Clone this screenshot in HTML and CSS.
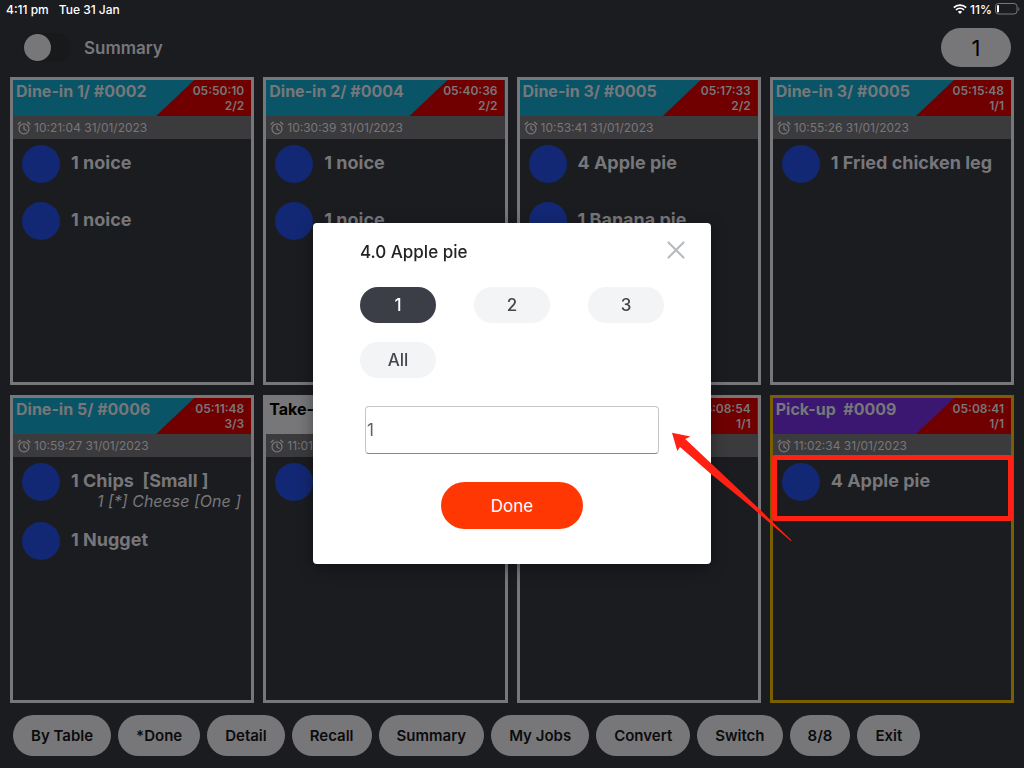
FILE: index.html
```html
<!DOCTYPE html>
<html lang="en">
<head>
<meta charset="utf-8">
<meta name="viewport" content="width=device-width, initial-scale=1">
<title>Kitchen display</title>
<link rel="stylesheet" href="styles.css">
</head>
<body>
<svg class="defs" aria-hidden="true">
  <symbol id="alarm" viewBox="0 0 14 14">
    <g fill="none" stroke="currentColor" stroke-width="1.3" stroke-linecap="round" stroke-linejoin="round">
      <circle cx="7" cy="7.8" r="5"/>
      <path d="M7 5v3l2 1.3M1 3.2 3.4 1.2M13 3.2 10.6 1.2"/>
    </g>
  </symbol>
</svg>
<div class="app">
  <div class="status">
    <span>4:11 pm</span><span>Tue 31 Jan</span>
    <div class="status-right">
      <svg width="14" height="10" viewBox="0 0 14 10"><g fill="none" stroke="#fff" stroke-width="1.7"><path d="M.8 3.6a8.8 8.8 0 0 1 12.4 0"/><path d="M3 5.9a5.7 5.7 0 0 1 8 0"/></g><path fill="#fff" d="M4.9 7.7a3 3 0 0 1 4.2 0L7 9.9z"/></svg>
      <span>11%</span>
      <svg width="25" height="12" viewBox="0 0 25 12"><rect x=".5" y=".5" width="21.5" height="10.5" rx="3" fill="none" stroke="#77777a"/><rect x="2" y="2" width="2" height="7.5" rx="1" fill="#fff"/><path d="M23.3 4v4c1.4-.6 1.4-3.400 0-4z" fill="#77777a"/></svg>
    </div>
  </div>
  <header class="top">
    <label class="switch"><input type="checkbox" class="toggle">Summary</label>
    <button class="count">1</button>
  </header>
  <main class="grid">
    <article class="card">
      <div class="head"><h2>Dine-in 1/ #0002</h2><div class="timer">05:50:10<br>2/2</div></div>
      <div class="stamp"><svg><use href="#alarm"/></svg>10:21:04 31/01/2023</div>
      <ul><li><i class="dot"></i><div>1 noice</div></li><li><i class="dot"></i><div>1 noice</div></li></ul>
    </article>
    <article class="card">
      <div class="head"><h2>Dine-in 2/ #0004</h2><div class="timer">05:40:36<br>2/2</div></div>
      <div class="stamp"><svg><use href="#alarm"/></svg>10:30:39 31/01/2023</div>
      <ul><li><i class="dot"></i><div>1 noice</div></li><li><i class="dot"></i><div>1 noice</div></li></ul>
    </article>
    <article class="card">
      <div class="head"><h2>Dine-in 3/ #0005</h2><div class="timer">05:17:33<br>2/2</div></div>
      <div class="stamp"><svg><use href="#alarm"/></svg>10:53:41 31/01/2023</div>
      <ul><li><i class="dot"></i><div>4 Apple pie</div></li><li><i class="dot"></i><div>1 Banana pie</div></li></ul>
    </article>
    <article class="card">
      <div class="head"><h2>Dine-in 3/ #0005</h2><div class="timer">05:15:48<br>1/1</div></div>
      <div class="stamp"><svg><use href="#alarm"/></svg>10:55:26 31/01/2023</div>
      <ul><li><i class="dot"></i><div>1 Fried chicken leg</div></li></ul>
    </article>
    <article class="card">
      <div class="head"><h2>Dine-in 5/ #0006</h2><div class="timer">05:11:48<br>3/3</div></div>
      <div class="stamp"><svg><use href="#alarm"/></svg>10:59:27 31/01/2023</div>
      <ul><li><i class="dot"></i><div>1 Chips&nbsp; [Small ]<em>1 [*] Cheese [One ]</em></div></li><li><i class="dot"></i><div>1 Nugget</div></li></ul>
    </article>
    <article class="card takeaway">
      <div class="head"><h2>Take-away</h2><div class="timer"></div></div>
      <div class="stamp"><svg><use href="#alarm"/></svg>11:01</div>
      <ul><li><i class="dot"></i></li></ul>
    </article>
    <article class="card takeaway">
      <div class="head"><h2></h2><div class="timer">05:08:54<br>1/1</div></div>
      <div class="stamp"></div>
      <ul></ul>
    </article>
    <article class="card pickup">
      <div class="head"><h2>Pick-up&nbsp; #0009</h2><div class="timer">05:08:41<br>1/1</div></div>
      <div class="stamp"><svg><use href="#alarm"/></svg>11:02:34 31/01/2023</div>
      <ul><li class="marked"><i class="dot"></i><div>4 Apple pie</div></li></ul>
    </article>
  </main>
  <footer class="actions">
    <button>By Table</button><button>*Done</button><button>Detail</button><button>Recall</button><button>Summary</button><button>My Jobs</button><button>Convert</button><button>Switch</button><button>8/8</button><button>Exit</button>
  </footer>
</div>
<div class="overlay">
  <section class="modal" role="dialog" aria-labelledby="dialog-title">
    <h1 id="dialog-title">4.0 Apple pie</h1>
    <button class="close" aria-label="Close"><svg width="18" height="18" viewBox="0 0 18 18"><path d="M1.500 1.500l15 15M16.500 1.500l-15 15" stroke="#b8bcc2" stroke-width="2.200" stroke-linecap="round"/></svg></button>
    <div class="choices">
      <button class="selected">1</button><button>2</button><button>3</button><button>All</button>
    </div>
    <input class="qty" type="text" value="1" aria-label="Quantity">
    <button class="done">Done</button>
    <svg class="arrow" width="122" height="110" viewBox="0 0 122 110"><path fill="#ff2114" d="M1 .7 19.500 4.500 14.300 7 45 36 82 71 120.700 108.500 119.800 109 78 73 40 42 9 15 6.300 19z"/></svg>
  </section>
</div>
</body>
</html>
```
FILE: styles.css
```css
* { box-sizing: border-box; }
body { margin: 0; background: #1b1c20; color: #77777a; font-family: Inter, "Liberation Sans", sans-serif; }
button, input { font: inherit; }
button { border: 0; padding: 0; }
h1, h2, ul { margin: 0; padding: 0; list-style: none; }
.defs { position: absolute; width: 0; height: 0; }
.app { min-height: 100vh; display: flex; flex-direction: column; }

.status { display: flex; align-items: center; gap: 10px; height: 18px; padding: 0 4px 0 6px; color: #fff; font-size: 12px; font-weight: 500; }
.status-right { display: flex; align-items: center; gap: 3px; margin-left: auto; }
.top { display: flex; align-items: center; justify-content: space-between; height: 59px; padding: 0 13px 0 23px; }
.switch { display: flex; align-items: center; gap: 13px; font-size: 17px; font-weight: 600; }
.toggle { appearance: none; width: 48px; height: 29px; margin: 0; border-radius: 15px; background: #18191b; }
.toggle::before { content: ""; display: block; width: 27px; height: 27px; margin: 1px; border-radius: 50%; background: #77777a; }
.count { width: 70px; height: 39px; border-radius: 20px; background: #77777a; color: #000; font-size: 22px; }

.grid { flex: 1; display: grid; grid-template-columns: repeat(4, minmax(0, 1fr)); grid-auto-rows: 1fr; gap: 10px 9px; padding: 0 10px; }
.card { border: 3px solid #77777a; }
.head { display: flex; justify-content: space-between; height: 36px; background: #095567; }
.head h2 { width: 0; padding-left: 3px; font-size: 16px; line-height: 22px; font-weight: 700; white-space: nowrap; }
.timer { width: 95px; padding: 3px 7px 0 0; background: #700000; clip-path: polygon(38px 0, 100% 0, 100% 100%, 0 100%); text-align: right; font-size: 12px; line-height: 15px; font-weight: 600; }
.stamp { display: flex; align-items: center; gap: 3px; height: 23px; padding-left: 4px; background: #3b3b3d; font-size: 12px; }
.stamp svg { width: 14px; height: 14px; }
.card li { position: relative; display: flex; gap: 11px; min-height: 57px; padding: 6px 0 0 9px; font-size: 18px; line-height: 20px; font-weight: 700; }
.card li > div { padding-top: 8px; white-space: nowrap; }
.card em { display: block; padding: 0 0 4px 26px; font-size: 16px; line-height: 21px; font-weight: 400; }
.dot { flex: none; width: 38px; height: 38px; border-radius: 50%; background: #132874; }
.takeaway .head { background: #77777a; color: #000; }
.takeaway .timer { color: #77777a; }
.pickup { border-color: #786000; }
.pickup .head { background: #3b1772; }
.marked::after { content: ""; position: absolute; inset: -2px -2px -7px -1px; border: 5px solid #ff2114; border-radius: 3px; }

.actions { display: flex; flex-wrap: wrap; gap: 7px; padding: 12px 13px; }
.actions button { height: 41px; padding: 0 18px; border-radius: 21px; background: #77777a; color: #0b0b0c; font-size: 15px; font-weight: 600; }

.overlay { position: fixed; inset: 0; display: flex; align-items: center; justify-content: center; padding-top: 19px; }
.modal { position: relative; display: flex; flex-direction: column; width: 398px; padding: 17px 47px 35px; border-radius: 4px; background: #fff; box-shadow: 0 4px 16px rgba(0, 0, 0, .4); color: #45474c; font-size: 17px; }
.modal h1 { color: #222326; font-size: 17px; line-height: 24px; font-weight: 500; }
.close { position: absolute; top: 18px; right: 26px; width: 18px; height: 18px; background: none; }
.close svg { display: block; }
.choices { display: grid; grid-template-columns: repeat(3, 1fr); gap: 19px 38px; margin-top: 23px; }
.choices button { height: 36px; border-radius: 18px; background: #f3f4f6; color: #45474c; font-weight: 500; }
.choices .selected { background: #3c3e47; color: #fff; }
.qty { height: 48px; margin: 28px 5px; padding: 0 1px; border: 1px solid #c6c6c6; border-bottom-color: #888; border-radius: 4px; background: #fff; color: #606164; }
.done { align-self: center; width: 142px; height: 47px; border-radius: 24px; background: #ff3803; color: #fff; }
.arrow { position: absolute; left: 358px; top: 209px; }
```
